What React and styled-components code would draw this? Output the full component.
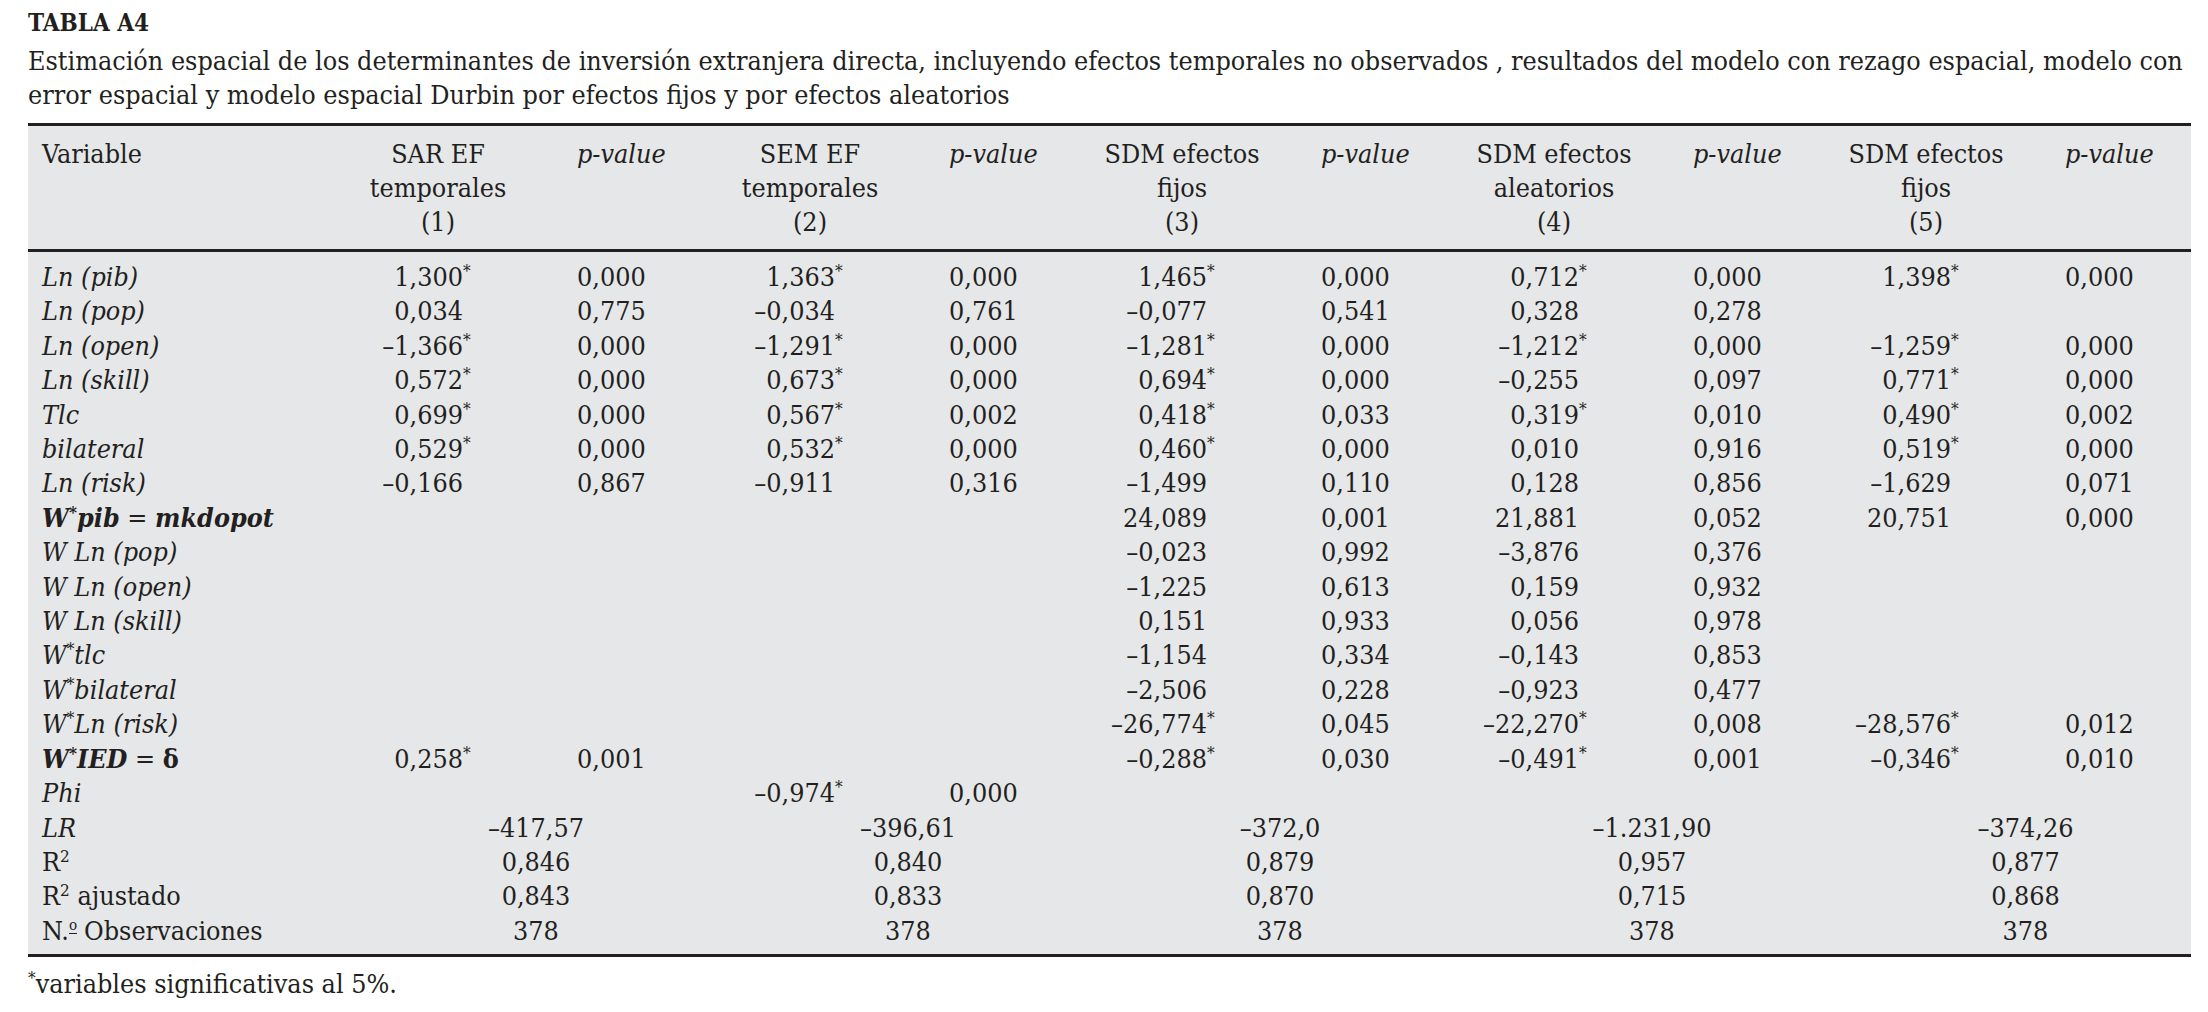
import React from "react";
import styled, { createGlobalStyle } from "styled-components";

const GlobalStyle = createGlobalStyle`
  html, body {
    margin: 0;
    padding: 0;
    background: #ffffff;
  }
  body {
    font-family: "DejaVu Serif Condensed", "DejaVu Serif", "Liberation Serif", serif;
    font-stretch: condensed;
    color: #231f20;
  }
`;

const columns = [
  { title: ["SAR EF", "temporales", "(1)"] },
  { title: ["SEM EF", "temporales", "(2)"] },
  { title: ["SDM efectos", "fijos", "(3)"] },
  { title: ["SDM efectos", "aleatorios", "(4)"] },
  { title: ["SDM efectos", "fijos", "(5)"] },
];

const rows = [
  { label: "Ln (pib)", values: ["1,300*", "0,000", "1,363*", "0,000", "1,465*", "0,000", "0,712*", "0,000", "1,398*", "0,000"] },
  { label: "Ln (pop)", values: ["0,034", "0,775", "–0,034", "0,761", "–0,077", "0,541", "0,328", "0,278", "", ""] },
  { label: "Ln (open)", values: ["–1,366*", "0,000", "–1,291*", "0,000", "–1,281*", "0,000", "–1,212*", "0,000", "–1,259*", "0,000"] },
  { label: "Ln (skill)", values: ["0,572*", "0,000", "0,673*", "0,000", "0,694*", "0,000", "–0,255", "0,097", "0,771*", "0,000"] },
  { label: "Tlc", values: ["0,699*", "0,000", "0,567*", "0,002", "0,418*", "0,033", "0,319*", "0,010", "0,490*", "0,002"] },
  { label: "bilateral", values: ["0,529*", "0,000", "0,532*", "0,000", "0,460*", "0,000", "0,010", "0,916", "0,519*", "0,000"] },
  { label: "Ln (risk)", values: ["–0,166", "0,867", "–0,911", "0,316", "–1,499", "0,110", "0,128", "0,856", "–1,629", "0,071"] },
  { label: "mkdopot", values: ["", "", "", "", "24,089", "0,001", "21,881", "0,052", "20,751", "0,000"] },
  { label: "W Ln (pop)", values: ["", "", "", "", "–0,023", "0,992", "–3,876", "0,376", "", ""] },
  { label: "W Ln (open)", values: ["", "", "", "", "–1,225", "0,613", "0,159", "0,932", "", ""] },
  { label: "W Ln (skill)", values: ["", "", "", "", "0,151", "0,933", "0,056", "0,978", "", ""] },
  { label: "W*tlc", values: ["", "", "", "", "–1,154", "0,334", "–0,143", "0,853", "", ""] },
  { label: "W*bilateral", values: ["", "", "", "", "–2,506", "0,228", "–0,923", "0,477", "", ""] },
  { label: "W*Ln (risk)", values: ["", "", "", "", "–26,774*", "0,045", "–22,270*", "0,008", "–28,576*", "0,012"] },
  { label: "ied", values: ["0,258*", "0,001", "", "", "–0,288*", "0,030", "–0,491*", "0,001", "–0,346*", "0,010"] },
  { label: "Phi", values: ["", "", "–0,974*", "0,000", "", "", "", "", "", ""] },
];

const summary = [
  { label: "LR", italic: true, values: ["–417,57", "–396,61", "–372,0", "–1.231,90", "–374,26"] },
  { label: "R2", values: ["0,846", "0,840", "0,879", "0,957", "0,877"] },
  { label: "R2aj", values: ["0,843", "0,833", "0,870", "0,715", "0,868"] },
  { label: "N", values: ["378", "378", "378", "378", "378"] },
];

const Page = styled.div`
  padding: 6px 17px 0 28px;
`;

const Title = styled.div`
  font-size: 24px;
  font-weight: bold;
  line-height: 34px;
`;

const Caption = styled.p`
  margin: 4px -20px 0 0;
  font-size: 26.7px;
  line-height: 34px;
`;

const Table = styled.table`
  width: 100%;
  margin-top: 11px;
  border-collapse: collapse;
  table-layout: fixed;
  background: #e6e7e9;
  border-top: 3px solid #231f20;
  border-bottom: 3px solid #231f20;
  font-size: 26.7px;
  line-height: 34.4px;
`;

const Col = styled.col`
  width: ${(p) => p.$w};
`;

const HeadRow = styled.tr`
  border-bottom: 3px solid #231f20;
`;

const Th = styled.th`
  font-weight: normal;
  vertical-align: top;
  padding: 11px 0 10px;
  text-align: ${(p) => p.$align || "center"};
  padding-left: ${(p) => p.$pl || 0}px;
  font-style: ${(p) => (p.$italic ? "italic" : "normal")};
  line-height: 34px;
  white-space: nowrap;
`;

const Row = styled.tr`
  &:first-child td {
    padding-top: 8px;
  }
`;

const LastRow = styled.tr`
  td {
    padding-bottom: 6px;
  }
`;

const LabelCell = styled.td`
  padding: 0 0 0 14px;
  white-space: nowrap;
  font-style: ${(p) => (p.$italic ? "italic" : "normal")};
`;

const CoefCell = styled.td`
  padding: 0 74px 0 0;
  text-align: right;
  white-space: nowrap;
`;

const PCell = styled.td`
  padding: 0 0 0 29px;
  text-align: left;
  white-space: nowrap;
`;

const SpanCell = styled.td`
  padding: 0 0 0 44px;
  text-align: center;
  white-space: nowrap;
`;

const Star = styled.span`
  display: inline-block;
  width: 11px;
  text-align: left;
  font-size: 17px;
  line-height: 1;
  vertical-align: 9px;
  visibility: ${(p) => (p.$show ? "visible" : "hidden")};
`;

const Sup = styled.sup`
  font-size: 17px;
  line-height: 1;
  vertical-align: 9px;
  font-style: normal;
`;

const Strong = styled.span`
  font-weight: bold;
  font-style: ${(p) => (p.$italic ? "italic" : "normal")};
`;

const Ordinal = styled.span`
  display: inline-block;
  font-size: 15px;
  line-height: 1;
  vertical-align: 10px;
  border-bottom: 1px solid currentColor;
  margin-right: 7px;
`;

const Footnote = styled.p`
  margin: 10px 0 0;
  font-size: 26.7px;
  line-height: 34px;
`;

function Label({ id }) {
  if (id === "mkdopot") {
    return (
      <LabelCell>
        <Strong $italic>
          W<Sup>*</Sup>pib
        </Strong>{" "}
        = <Strong $italic>mkdopot</Strong>
      </LabelCell>
    );
  }
  if (id === "ied") {
    return (
      <LabelCell>
        <Strong $italic>
          W<Sup>*</Sup>IED
        </Strong>{" "}
        = <Strong>δ</Strong>
      </LabelCell>
    );
  }
  if (id.startsWith("W*")) {
    return (
      <LabelCell $italic>
        W<Sup>*</Sup>
        {id.slice(2)}
      </LabelCell>
    );
  }
  return <LabelCell $italic>{id}</LabelCell>;
}

function SummaryLabel({ row }) {
  if (row.label === "R2")
    return (
      <LabelCell>
        R<Sup>2</Sup>
      </LabelCell>
    );
  if (row.label === "R2aj")
    return (
      <LabelCell>
        R<Sup>2</Sup> ajustado
      </LabelCell>
    );
  if (row.label === "N")
    return (
      <LabelCell>
        N.<Ordinal>o</Ordinal>Observaciones
      </LabelCell>
    );
  return <LabelCell $italic={row.italic}>{row.label}</LabelCell>;
}

function Coef({ value }) {
  const star = value.endsWith("*");
  return (
    <CoefCell>
      {star ? value.slice(0, -1) : value}
      <Star $show={star}>*</Star>
    </CoefCell>
  );
}

export default function App() {
  return (
    <Page>
      <GlobalStyle />
      <Title>TABLA A4</Title>
      <Caption>
        Estimación espacial de los determinantes de inversión extranjera directa, incluyendo efectos
        temporales no observados , resultados del modelo con rezago espacial, modelo con error
        espacial y modelo espacial Durbin por efectos fijos y por efectos aleatorios
      </Caption>
      <Table>
        <colgroup>
          <Col $w="300px" />
          {columns.map((c, i) => (
            <React.Fragment key={i}>
              <Col $w="220px" />
              <Col $w={i === columns.length - 1 ? "auto" : "152px"} />
            </React.Fragment>
          ))}
        </colgroup>
        <thead>
          <HeadRow>
            <Th $align="left" $pl={14}>
              Variable
            </Th>
            {columns.map((c, i) => (
              <React.Fragment key={i}>
                <Th>
                  {c.title.map((t, j) => (
                    <div key={j}>{t}</div>
                  ))}
                </Th>
                <Th $align="left" $pl={29} $italic>
                  p-value
                </Th>
              </React.Fragment>
            ))}
          </HeadRow>
        </thead>
        <tbody>
          {rows.map((r) => (
            <Row key={r.label}>
              <Label id={r.label} />
              {r.values.map((v, i) =>
                i % 2 === 0 ? <Coef key={i} value={v} /> : <PCell key={i}>{v}</PCell>
              )}
            </Row>
          ))}
          {summary.map((r, idx) => {
            const R = idx === summary.length - 1 ? LastRow : Row;
            return (
              <R key={r.label}>
                <SummaryLabel row={r} />
                {r.values.map((v, i) => (
                  <SpanCell key={i} colSpan={2}>
                    {v}
                  </SpanCell>
                ))}
              </R>
            );
          })}
        </tbody>
      </Table>
      <Footnote>
        <Sup>*</Sup>variables significativas al 5%.
      </Footnote>
    </Page>
  );
}
